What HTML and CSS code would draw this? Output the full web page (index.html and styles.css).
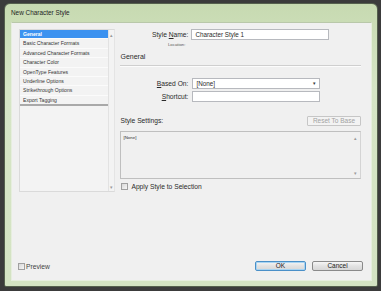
FILE: index.html
```html
<!DOCTYPE html>
<html lang="en">
<head>
    <meta charset="UTF-8">
    <title>New Character Style</title>
    <link rel="stylesheet" href="styles.css">
</head>
<body>
<div class="dialog">
    <div class="dialog__title">New Character Style</div>

    <div class="dialog__body">
        <div class="dialog__main">

            <div class="pages">
                <ul class="pages__list">
                    <li class="pages__item pages__item--active">General</li>
                    <li class="pages__item">Basic Character Formats</li>
                    <li class="pages__item">Advanced Character Formats</li>
                    <li class="pages__item">Character Color</li>
                    <li class="pages__item">OpenType Features</li>
                    <li class="pages__item">Underline Options</li>
                    <li class="pages__item">Strikethrough Options</li>
                    <li class="pages__item">Export Tagging</li>
                </ul>
                <div class="scroll">
                    <span class="scroll__arrow">&#9652;</span>
                    <span class="scroll__arrow">&#9662;</span>
                </div>
            </div>

            <div class="panel">
                <div class="field">
                    <label class="field__label">Style <u>N</u>ame:</label>
                    <div class="field__input field__input--name">Character Style 1</div>
                </div>
                <div class="location">Location:</div>

                <div class="panel__heading">General</div>
                <div class="panel__rule"></div>

                <div class="field field--based">
                    <label class="field__label"><u>B</u>ased On:</label>
                    <div class="field__input field__input--select">
                        <span>[None]</span>
                        <span class="field__caret">&#9662;</span>
                    </div>
                </div>
                <div class="field field--shortcut">
                    <label class="field__label"><u>S</u>hortcut:</label>
                    <div class="field__input field__input--select"></div>
                </div>

                <div class="settings-head">
                    <span>Style Settings:</span>
                    <button class="btn btn--disabled" type="button">Reset To Base</button>
                </div>
                <div class="settings">
                    <span class="settings__text">[None]</span>
                    <div class="settings__scroll">
                        <span class="scroll__arrow">&#9652;</span>
                        <span class="scroll__arrow">&#9662;</span>
                    </div>
                </div>

                <label class="check check--apply">
                    <span class="check__box"></span>
                    <span>Apply Style to Selection</span>
                </label>
            </div>
        </div>

        <div class="dialog__footer">
            <label class="check check--preview">
                <span class="check__box"></span>
                <span>Preview</span>
            </label>
            <button class="btn btn--default" type="button">OK</button>
            <button class="btn btn--cancel" type="button">Cancel</button>
        </div>
    </div>
</div>
</body>
</html>
```

FILE: styles.css
```css
html, body {
    height: 100%;
}

body {
    margin: 0;
    background: #3b3b3b;
    font-family: "Liberation Sans", Arial, sans-serif;
    color: #2a2a2a;
    overflow: hidden;
}

.dialog {
    box-sizing: border-box;
    width: 374px;
    height: 284px;
    margin: 3px 0 0 4px;
    padding: 0 5px 5px 6px;
    display: flex;
    flex-direction: column;
    background: linear-gradient(#c7dab1, #d6e5c6 30%, #d4e3c3);
    border: 1px solid #55604d;
    border-radius: 6px 6px 2px 2px;
}

.dialog__title {
    height: 18px;
    line-height: 17px;
    font-size: 6.4px;
    color: #1e1e1e;
}

.dialog__body {
    flex: 1;
    display: flex;
    flex-direction: column;
    box-sizing: border-box;
    padding: 6px 8px 9px 6px;
    background: #f0f0f0;
    border: 1px solid #e6eede;
    border-top-color: #b9c8aa;
}

.dialog__main {
    display: flex;
    gap: 5px;
    padding: 0 2px 0 1px;
}

/* page list */

.pages {
    box-sizing: border-box;
    width: 97px;
    height: 163px;
    display: flex;
    border: 1px solid #dadada;
    border-right-color: #e4e4e4;
    background: #f3f3f3;
}

.pages__list {
    list-style: none;
    margin: 0;
    padding: 0;
    width: 88px;
    border-right: 1px solid #e2e2e2;
}

.pages__item {
    box-sizing: border-box;
    height: 9.4px;
    line-height: 9px;
    padding-left: 3px;
    font-size: 5.1px;
    color: #333;
    border-bottom: 1px solid #fbfbfb;
    white-space: nowrap;
}
.pages__item:last-child {
    border-bottom: 2px solid #a9a9a9;
    height: 10.4px;
}
.pages__item--active {
    background: #3c92f0;
    color: #fff;
    font-weight: bold;
}

.scroll {
    flex: 1;
    display: flex;
    flex-direction: column;
    justify-content: space-between;
    align-items: center;
    padding: 2px 0 1px;
}

.scroll__arrow {
    font-size: 5px;
    line-height: 6px;
    color: #9a9a9a;
}

/* right panel */

.panel {
    width: 242px;
    font-size: 6.7px;
}

.field {
    display: flex;
    align-items: center;
    height: 11px;
}
.field--based {
    margin-top: 11px;
}
.field--shortcut {
    margin-top: 2px;
}

.field__label {
    width: 68px;
    text-align: right;
    font-size: 6.7px;
}

.field__input {
    box-sizing: border-box;
    height: 11px;
    line-height: 9px;
    padding: 0 3px;
    background: #fff;
    border: 1px solid #b7b9be;
    font-size: 6.3px;
}
.field__input--name {
    width: 138px;
    margin-left: 3px;
}
.field__input--select {
    width: 128px;
    margin-left: 4px;
    display: flex;
    justify-content: space-between;
}

.field__caret {
    font-size: 5px;
    color: #333;
}

.location {
    width: 65px;
    margin-top: 2px;
    height: 6px;
    line-height: 6px;
    text-align: right;
    font-size: 4.3px;
    color: #555;
}

.panel__heading {
    margin-top: 4px;
    height: 10px;
    line-height: 10px;
    font-size: 7px;
}

.panel__rule {
    margin-top: 3px;
    border-top: 1px solid #cfcfcf;
    border-bottom: 1px solid #fcfcfc;
}

.settings-head {
    margin-top: 13px;
    height: 11px;
    display: flex;
    justify-content: space-between;
    align-items: center;
}

.settings {
    box-sizing: border-box;
    margin-top: 5px;
    height: 48px;
    display: flex;
    justify-content: space-between;
    border: 1px solid #bfbfbf;
    border-right-color: #d4d4d4;
    background: #f0f0f0;
}

.settings__text {
    padding: 3px 0 0 2px;
    font-size: 4.4px;
    color: #333;
}

.settings__scroll {
    width: 10px;
    display: flex;
    flex-direction: column;
    justify-content: space-between;
    align-items: center;
    padding: 3px 0 2px;
}

/* checkboxes */

.check {
    display: flex;
    align-items: center;
    gap: 3px;
    font-size: 6.7px;
}
.check--apply {
    margin-top: 4px;
    height: 7px;
    padding-left: 1px;
}
.check--preview {
    margin-right: auto;
    gap: 1px;
    color: #444;
}

.check__box {
    box-sizing: border-box;
    width: 7px;
    height: 7px;
    border: 1px solid #a0a0a0;
    background: linear-gradient(135deg, #d8d8d8, #f6f6f6);
}

/* buttons */

.btn {
    box-sizing: border-box;
    height: 10px;
    padding: 0;
    font-family: inherit;
    font-size: 6.5px;
    line-height: 8px;
    color: #222;
    border-radius: 2px;
    background: linear-gradient(#f6f6f6, #e2e2e2 50%, #d7d7d7);
    border: 1px solid #8a8a8a;
}
.btn--disabled {
    width: 54px;
    color: #a2a2a2;
    background: #f3f3f3;
    border-color: #c6c6c6;
    border-radius: 1px;
}
.btn--default {
    width: 51px;
    border-color: #4a90c8;
    box-shadow: inset 0 0 0 1px #a8d4f2;
}
.btn--cancel {
    width: 51px;
    margin-left: 6px;
}

.dialog__footer {
    margin-top: auto;
    display: flex;
    align-items: center;
    height: 10px;
}
```
